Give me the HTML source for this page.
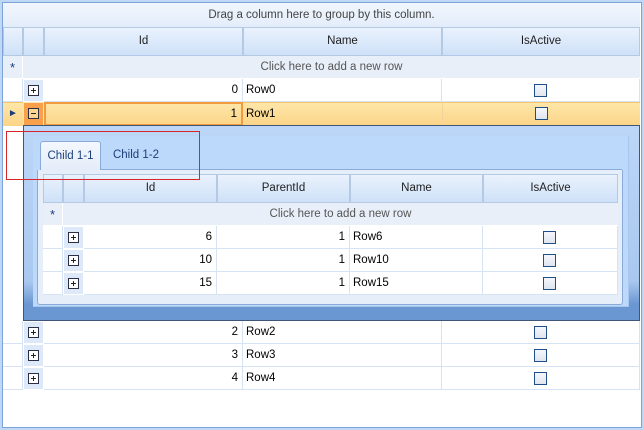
<!DOCTYPE html>
<html><head><style>
*{margin:0;padding:0;box-sizing:border-box}
body{width:644px;height:430px;background:#fff;font-family:"Liberation Sans",sans-serif;font-size:11.5px;color:#000;position:relative;overflow:hidden}
.a{position:absolute}
.h{background:linear-gradient(#eaf2fd,#cfe1f8);border:1px solid #fff;outline:1px solid #b4c9e4;outline-offset:-1px;text-align:center;line-height:26px;color:#1e1e1e}
.c{border-right:1px solid #d5e3f5;border-bottom:1px solid #d5e3f5;line-height:22px;white-space:nowrap;overflow:hidden}
.r{text-align:right;padding-right:4px}
.l{padding-left:3px}
.cb{position:absolute;width:13px;height:13px;border:1px solid #1f4f8a;background:linear-gradient(#f5f7fb,#dfe5ee)}
.ex{position:absolute;width:11px;height:11px;border:1px solid #2a2f45;background:#fff}
.ex:before{content:"";position:absolute;left:2px;top:4px;width:5px;height:1px;background:#222}
.ex.p:after{content:"";position:absolute;left:4px;top:2px;width:1px;height:5px;background:#222}
.ecell{background:#dde9f9;border:1px solid #fff}
</style></head><body>
<div class="a" style="left:0;top:0;width:644px;height:430px;border:3px solid #bfd8f5"></div>
<div class="a" style="left:2px;top:2px;width:640px;height:426px;border:1px solid #7ea3d6"></div>
<div class="a" style="left:3px;top:3px;width:637px;height:24px;background:linear-gradient(#f1f6fd,#e3edfa);text-align:center;line-height:24px;color:#444">Drag a column here to group by this column.</div>
<div class="a h" style="left:3px;top:27px;width:20px;height:29px"></div>
<div class="a h" style="left:23px;top:27px;width:21px;height:29px"></div>
<div class="a h" style="left:44px;top:27px;width:199px;height:29px">Id</div>
<div class="a h" style="left:243px;top:27px;width:199px;height:29px">Name</div>
<div class="a h" style="left:442px;top:27px;width:198px;height:29px">IsActive</div>
<div class="a" style="left:3px;top:56px;width:637px;height:23px;background:#e8eff9;border-bottom:1px solid #fff"></div>
<div class="a" style="left:3px;top:56px;width:20px;height:23px;border-right:1px solid #fff;text-align:center;line-height:23px;color:#1b3d7a;font-size:13px">*</div>
<div class="a" style="left:23px;top:56px;width:617px;height:23px;text-align:center;line-height:23px;color:#555">Click here to add a new row</div>
<div class="a c" style="left:3px;top:79px;width:20px;height:23px"></div>
<div class="a ecell" style="left:23px;top:79px;width:21px;height:23px"><div class="ex p" style="left:4px;top:5px"></div></div>
<div class="a c r" style="left:44px;top:79px;width:199px;height:23px">0</div>
<div class="a c l" style="left:243px;top:79px;width:199px;height:23px">Row0</div>
<div class="a c" style="left:442px;top:79px;width:198px;height:23px"><div class="cb" style="left:92px;top:5px"></div></div>
<div class="a" style="left:3px;top:102px;width:637px;height:24px;background:linear-gradient(#fde6a9,#fcd486);border-top:1px solid #f8c56a"></div>
<div class="a" style="left:3px;top:102px;width:20px;height:24px;text-align:center;line-height:24px;color:#1b3d7a;font-size:10px">&#9658;</div>
<div class="a" style="left:23px;top:102px;width:21px;height:24px;background:#f8a04a;border:1px solid #fde3b0"><div class="ex" style="left:4px;top:5px;background:#fbd592"></div></div>
<div class="a r" style="left:44px;top:102px;width:199px;height:24px;border:2px solid #f39a3c;line-height:20px">1</div>
<div class="a l" style="left:243px;top:102px;width:199px;height:24px;line-height:24px">Row1</div>
<div class="a" style="left:442px;top:102px;width:198px;height:24px;border-left:1px solid #f2d49a"><div class="cb" style="left:92px;top:5px"></div></div>
<div class="a" style="left:23px;top:125px;width:617px;height:196px;border:1px solid #3f5676;background:linear-gradient(#bcd6f7,#a9c8ef 80%,#6a96d2 92%,#6a96d2)"></div>
<div class="a" style="left:33px;top:136px;width:596px;height:171px;background:#bcd8fb;border-right:1px solid #a8c6ee;border-bottom:1px solid #a8c6ee"></div>
<div class="a" style="left:100px;top:141px;width:522px;height:29px;border-bottom:1px solid #8aabd8"></div>
<div class="a" style="left:40px;top:141px;width:61px;height:30px;background:linear-gradient(#f4f8fd,#e3ecf9);border:1px solid #8aabd8;border-bottom:none;border-radius:3px 3px 0 0;text-align:center;line-height:28px;color:#1d3f7a">Child 1-1</div>
<div class="a" style="left:101px;top:141px;width:70px;height:29px;text-align:center;line-height:28px;color:#1d3f7a">Child 1-2</div>
<div class="a" style="left:37px;top:170px;width:586px;height:135px;background:#e6eef9;border:1px solid #8aabd8;border-top:none;border-radius:0 0 3px 3px"></div>
<div class="a h" style="left:43px;top:174px;width:20px;height:29px"></div>
<div class="a h" style="left:63px;top:174px;width:21px;height:29px"></div>
<div class="a h" style="left:84px;top:174px;width:133px;height:29px">Id</div>
<div class="a h" style="left:217px;top:174px;width:133px;height:29px">ParentId</div>
<div class="a h" style="left:350px;top:174px;width:133px;height:29px">Name</div>
<div class="a h" style="left:483px;top:174px;width:135px;height:29px">IsActive</div>
<div class="a" style="left:43px;top:203px;width:575px;height:23px;background:#e8eff9;border-bottom:1px solid #fff"></div>
<div class="a" style="left:43px;top:203px;width:20px;height:23px;border-right:1px solid #fff;text-align:center;line-height:23px;color:#1b3d7a;font-size:13px">*</div>
<div class="a" style="left:63px;top:203px;width:555px;height:23px;text-align:center;line-height:23px;color:#555">Click here to add a new row</div>
<div class="a" style="left:43px;top:226px;width:575px;height:69px;background:#fff;border-bottom:1px solid #d5e3f5"></div>
<div class="a c" style="left:43px;top:226px;width:20px;height:23px"></div>
<div class="a ecell" style="left:63px;top:226px;width:21px;height:23px"><div class="ex p" style="left:4px;top:5px"></div></div>
<div class="a c r" style="left:84px;top:226px;width:133px;height:23px">6</div>
<div class="a c r" style="left:217px;top:226px;width:133px;height:23px">1</div>
<div class="a c l" style="left:350px;top:226px;width:133px;height:23px">Row6</div>
<div class="a c" style="left:483px;top:226px;width:135px;height:23px"><div class="cb" style="left:60px;top:5px"></div></div>
<div class="a c" style="left:43px;top:249px;width:20px;height:23px"></div>
<div class="a ecell" style="left:63px;top:249px;width:21px;height:23px"><div class="ex p" style="left:4px;top:5px"></div></div>
<div class="a c r" style="left:84px;top:249px;width:133px;height:23px">10</div>
<div class="a c r" style="left:217px;top:249px;width:133px;height:23px">1</div>
<div class="a c l" style="left:350px;top:249px;width:133px;height:23px">Row10</div>
<div class="a c" style="left:483px;top:249px;width:135px;height:23px"><div class="cb" style="left:60px;top:5px"></div></div>
<div class="a c" style="left:43px;top:272px;width:20px;height:23px"></div>
<div class="a ecell" style="left:63px;top:272px;width:21px;height:23px"><div class="ex p" style="left:4px;top:5px"></div></div>
<div class="a c r" style="left:84px;top:272px;width:133px;height:23px">15</div>
<div class="a c r" style="left:217px;top:272px;width:133px;height:23px">1</div>
<div class="a c l" style="left:350px;top:272px;width:133px;height:23px">Row15</div>
<div class="a c" style="left:483px;top:272px;width:135px;height:23px"><div class="cb" style="left:60px;top:5px"></div></div>
<div class="a c" style="left:3px;top:321px;width:20px;height:23px"></div>
<div class="a ecell" style="left:23px;top:321px;width:21px;height:23px"><div class="ex p" style="left:4px;top:5px"></div></div>
<div class="a c r" style="left:44px;top:321px;width:199px;height:23px">2</div>
<div class="a c l" style="left:243px;top:321px;width:199px;height:23px">Row2</div>
<div class="a c" style="left:442px;top:321px;width:198px;height:23px"><div class="cb" style="left:92px;top:5px"></div></div>
<div class="a c" style="left:3px;top:344px;width:20px;height:23px"></div>
<div class="a ecell" style="left:23px;top:344px;width:21px;height:23px"><div class="ex p" style="left:4px;top:5px"></div></div>
<div class="a c r" style="left:44px;top:344px;width:199px;height:23px">3</div>
<div class="a c l" style="left:243px;top:344px;width:199px;height:23px">Row3</div>
<div class="a c" style="left:442px;top:344px;width:198px;height:23px"><div class="cb" style="left:92px;top:5px"></div></div>
<div class="a c" style="left:3px;top:367px;width:20px;height:23px"></div>
<div class="a ecell" style="left:23px;top:367px;width:21px;height:23px"><div class="ex p" style="left:4px;top:5px"></div></div>
<div class="a c r" style="left:44px;top:367px;width:199px;height:23px">4</div>
<div class="a c l" style="left:243px;top:367px;width:199px;height:23px">Row4</div>
<div class="a c" style="left:442px;top:367px;width:198px;height:23px"><div class="cb" style="left:92px;top:5px"></div></div>
<div class="a" style="left:6px;top:131px;width:194px;height:49px;border:1px solid #d9262b"></div>
</body></html>
